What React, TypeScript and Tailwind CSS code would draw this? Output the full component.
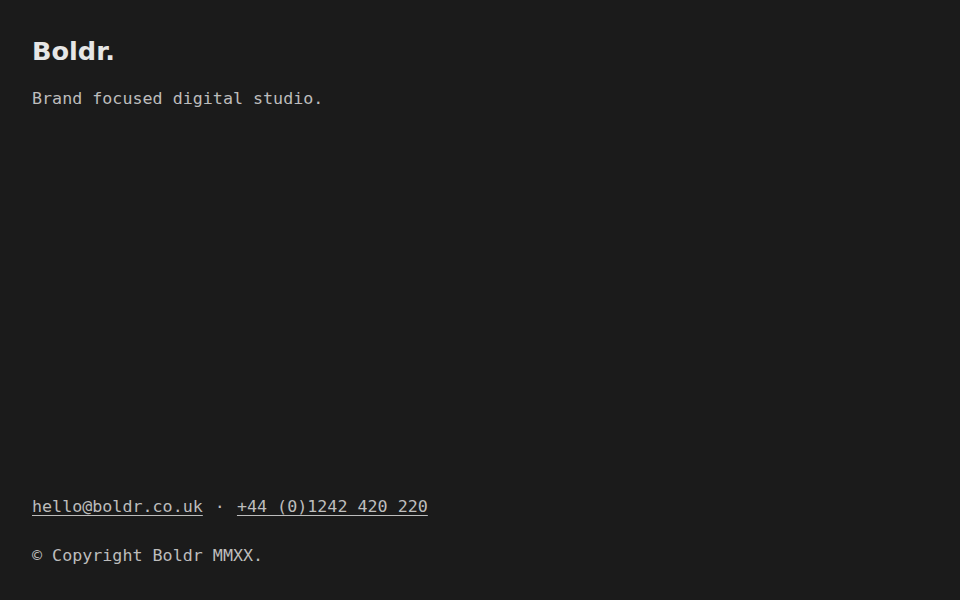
export default function App() {
  return (
    <div className="flex min-h-screen flex-col justify-between bg-[#1b1b1b] px-8 pt-8 pb-[33px] font-['DejaVu_Sans_Mono',monospace] text-[16.7px] text-[#bdbdbd]">
      <header>
        <h1 className="font-['DejaVu_Sans',sans-serif] text-[25.6px] font-bold leading-[38px] text-[#e6e6e6]">
          Boldr.
        </h1>
        <p className="mt-[16px] leading-6">Brand focused digital studio.</p>
      </header>
      <footer>
        <p className="leading-6">
          <a href="#" className="underline underline-offset-[3px]">
            hello@boldr.co.uk
          </a>
          <span className="mx-[2px]"> · </span>
          <a href="#" className="underline underline-offset-[3px]">
            +44 (0)1242 420 220
          </a>
        </p>
        <p className="mt-[25px] leading-6">© Copyright Boldr MMXX.</p>
      </footer>
    </div>
  );
}
